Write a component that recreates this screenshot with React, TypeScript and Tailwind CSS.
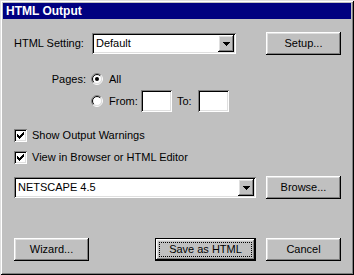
const raised =
  "shadow-[inset_-1px_-1px_0_#000,inset_1px_1px_0_#fff,inset_-2px_-2px_0_#808080,inset_2px_2px_0_#dfdfdf]";
const sunken =
  "shadow-[inset_1px_1px_0_#808080,inset_-1px_-1px_0_#fff,inset_2px_2px_0_#000,inset_-2px_-2px_0_#dfdfdf]";

function Button({
  label,
  className = "",
  primary = false,
}: {
  label: string;
  className?: string;
  primary?: boolean;
}) {
  if (primary) {
    return (
      <div className={`h-[23px] border border-black bg-[#c0c0c0] ${className}`}>
        <div className={`h-full w-full p-[3px] ${raised}`}>
          <div className="flex h-full w-full items-center justify-center border border-dotted border-black">
            {label}
          </div>
        </div>
      </div>
    );
  }
  return (
    <div className={`flex h-[23px] items-center justify-center bg-[#c0c0c0] ${raised} ${className}`}>
      {label}
    </div>
  );
}

function Arrow() {
  return (
    <svg width="7" height="4" viewBox="0 0 7 4" shapeRendering="crispEdges">
      <rect x="0" y="0" width="7" height="1" fill="#000" />
      <rect x="1" y="1" width="5" height="1" fill="#000" />
      <rect x="2" y="2" width="3" height="1" fill="#000" />
      <rect x="3" y="3" width="1" height="1" fill="#000" />
    </svg>
  );
}

function Combo({ value, className = "" }: { value: string; className?: string }) {
  return (
    <div className={`flex h-[21px] items-center bg-white p-[2px] ${sunken} ${className}`}>
      <span className="flex-1 pl-[2px]">{value}</span>
      <div className={`flex h-[17px] w-[16px] items-center justify-center bg-[#c0c0c0] ${raised}`}>
        <Arrow />
      </div>
    </div>
  );
}

function Radio({ checked }: { checked?: boolean }) {
  const arc = (r: number) => {
    const d = r * 0.7071;
    return {
      ul: `M${6 - d} ${6 + d} A${r} ${r} 0 0 1 ${6 + d} ${6 - d}`,
      lr: `M${6 + d} ${6 - d} A${r} ${r} 0 0 1 ${6 - d} ${6 + d}`,
    };
  };
  const o = arc(5.5);
  const i = arc(4.5);
  return (
    <svg width="12" height="12" viewBox="0 0 12 12">
      <circle cx="6" cy="6" r="4.5" fill="#fff" />
      <path d={o.ul} stroke="#808080" fill="none" />
      <path d={o.lr} stroke="#fff" fill="none" />
      <path d={i.ul} stroke="#000" fill="none" />
      <path d={i.lr} stroke="#dfdfdf" fill="none" />
      {checked && <circle cx="6" cy="6" r="2" fill="#000" />}
    </svg>
  );
}

function Check() {
  const cols = [3, 4, 5, 6, 7, 8, 9];
  const tops = [5, 6, 7, 6, 5, 4, 3];
  return (
    <div className={`h-[13px] w-[13px] bg-white ${sunken}`}>
      <svg width="13" height="13" viewBox="0 0 13 13" shapeRendering="crispEdges">
        {cols.map((x, n) => (
          <rect key={x} x={x} y={tops[n]} width="1" height="3" fill="#000" />
        ))}
      </svg>
    </div>
  );
}

export default function App() {
  return (
    <div
      className="flex h-[275px] w-[354px] flex-col bg-[#c0c0c0] p-[3px] text-[11px] leading-none text-black shadow-[inset_1px_1px_0_#dfdfdf,inset_-1px_-1px_0_#000,inset_2px_2px_0_#fff,inset_-2px_-2px_0_#808080]"
      style={{ fontFamily: '"Liberation Sans", Arial, sans-serif' }}
    >
      <div className="flex h-[16px] items-center bg-[#000080] pl-[3px] text-[12px] font-bold text-white">
        HTML Output
      </div>

      <div className="flex flex-1 flex-col pl-[11px] pr-[10px]">
        <div className="mt-[13px] flex h-[23px] items-center">
          <span className="w-[78px]">HTML Setting:</span>
          <Combo value="Default" className="w-[144px]" />
          <Button label="Setup..." className="ml-auto w-[75px]" />
        </div>

        <div className="mt-[13px] flex h-[22px] items-center">
          <span className="w-[72px] text-right">Pages:</span>
          <span className="ml-[5px] flex items-center gap-[6px]">
            <Radio checked />
            All
          </span>
        </div>
        <div className="flex h-[22px] items-center pl-[77px]">
          <Radio />
          <span className="ml-[6px] w-[32px]">From:</span>
          <div className={`h-[22px] w-[31px] bg-white ${sunken}`} />
          <span className="ml-[5px] w-[21px]">To:</span>
          <div className={`h-[22px] w-[31px] bg-white ${sunken}`} />
        </div>

        <div className="mt-[17px] flex h-[13px] items-center gap-[5px]">
          <Check />
          <span>Show Output Warnings</span>
        </div>
        <div className="mt-[9px] flex h-[13px] items-center gap-[5px]">
          <Check />
          <span>View in Browser or HTML Editor</span>
        </div>

        <div className="mt-[12px] flex h-[23px] items-center">
          <Combo value="NETSCAPE 4.5" className="w-[242px]" />
          <Button label="Browse..." className="ml-auto w-[75px]" />
        </div>

        <div className="mt-[39px] flex items-center">
          <Button label="Wizard..." className="w-[75px]" />
          <Button label="Save as HTML" primary className="ml-[66px] w-[101px]" />
          <Button label="Cancel" className="ml-auto w-[75px]" />
        </div>
      </div>
    </div>
  );
}
